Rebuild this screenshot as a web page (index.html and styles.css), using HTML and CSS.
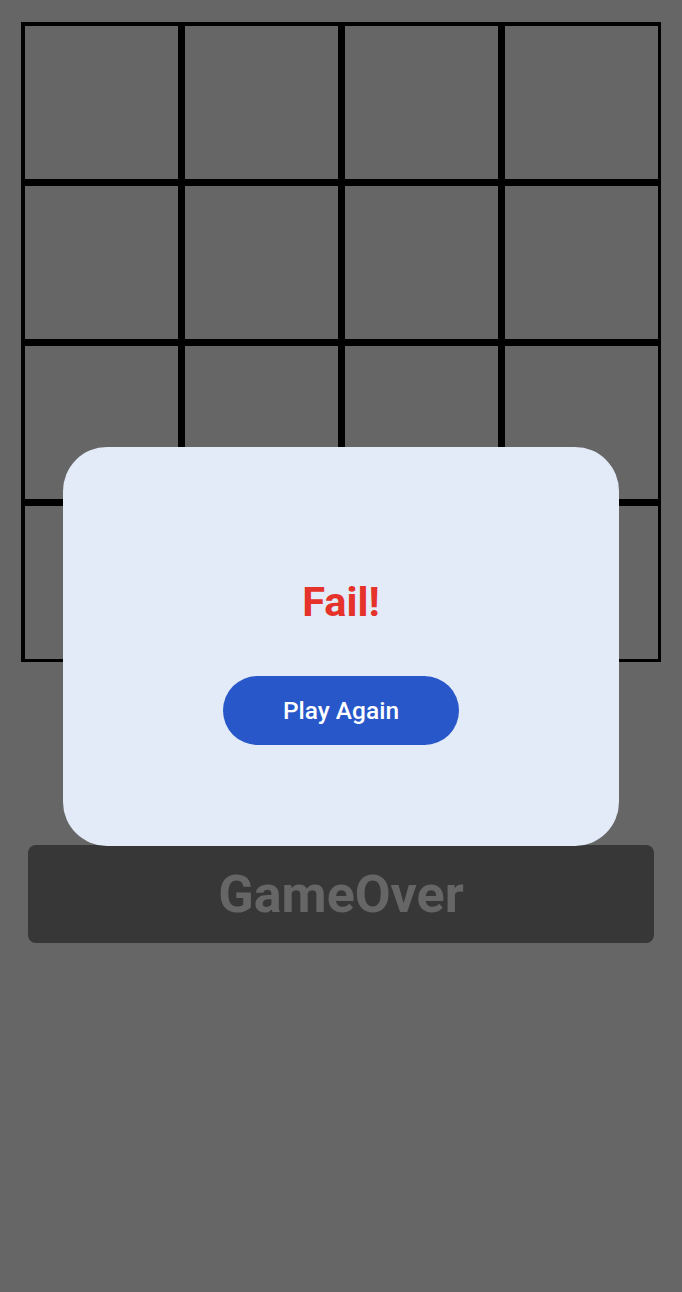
FILE: index.html
```html
<!DOCTYPE html>
<html>
<head>
<meta charset="utf-8">
<link rel="stylesheet" href="styles.css">
</head>
<body>
<main class="screen">
  <div class="board">
    <div class="cell"></div><div class="cell"></div><div class="cell"></div><div class="cell"></div>
    <div class="cell"></div><div class="cell"></div><div class="cell"></div><div class="cell"></div>
    <div class="cell"></div><div class="cell"></div><div class="cell"></div><div class="cell"></div>
    <div class="cell"></div><div class="cell"></div><div class="cell"></div><div class="cell"></div>
  </div>
  <div class="status-bar">GameOver</div>
</main>
<div class="overlay">
  <div class="dialog">
    <div class="dialog-title">Fail!</div>
    <button class="play-btn">Play Again</button>
  </div>
</div>
</body>
</html>
```
FILE: styles.css
```css
html, body {
  margin: 0;
  padding: 0;
}
body {
  background: #666666;
  font-family: Roboto, "Liberation Sans", sans-serif;
  width: 682px;
  height: 1292px;
  overflow: hidden;
}
.screen {
  display: flex;
  flex-direction: column;
  padding: 22px 0 0 21px;
}
.board {
  width: 640px;
  height: 640px;
  box-sizing: border-box;
  background: #000;
  padding: 3.5px;
  display: grid;
  grid-template-columns: repeat(4, 1fr);
  grid-template-rows: repeat(4, 1fr);
  gap: 7px;
}
.cell {
  background: #666666;
}
.status-bar {
  margin: 183px 0 0 7px;
  width: 626px;
  height: 98px;
  border-radius: 8px;
  background: #373737;
  color: #666666;
  font-weight: 700;
  font-size: 52px;
  display: flex;
  align-items: center;
  justify-content: center;
}
.overlay {
  position: fixed;
  inset: 0;
  display: flex;
  align-items: center;
  justify-content: center;
}
.dialog {
  width: 556px;
  height: 399px;
  box-sizing: border-box;
  margin-top: 1px;
  border-radius: 44px;
  background: #e3eaf8;
  display: flex;
  flex-direction: column;
  align-items: center;
  padding-top: 131px;
}
.dialog-title {
  color: #e5322a;
  font-weight: 700;
  font-size: 41.5px;
  line-height: 48px;
}
.play-btn {
  margin-top: 50px;
  width: 236px;
  height: 69px;
  border: none;
  border-radius: 35px;
  background: #2757c9;
  color: #ffffff;
  font-family: Roboto, "Liberation Sans", sans-serif;
  font-weight: 500;
  font-size: 24.5px;
  padding: 0;
}
```
